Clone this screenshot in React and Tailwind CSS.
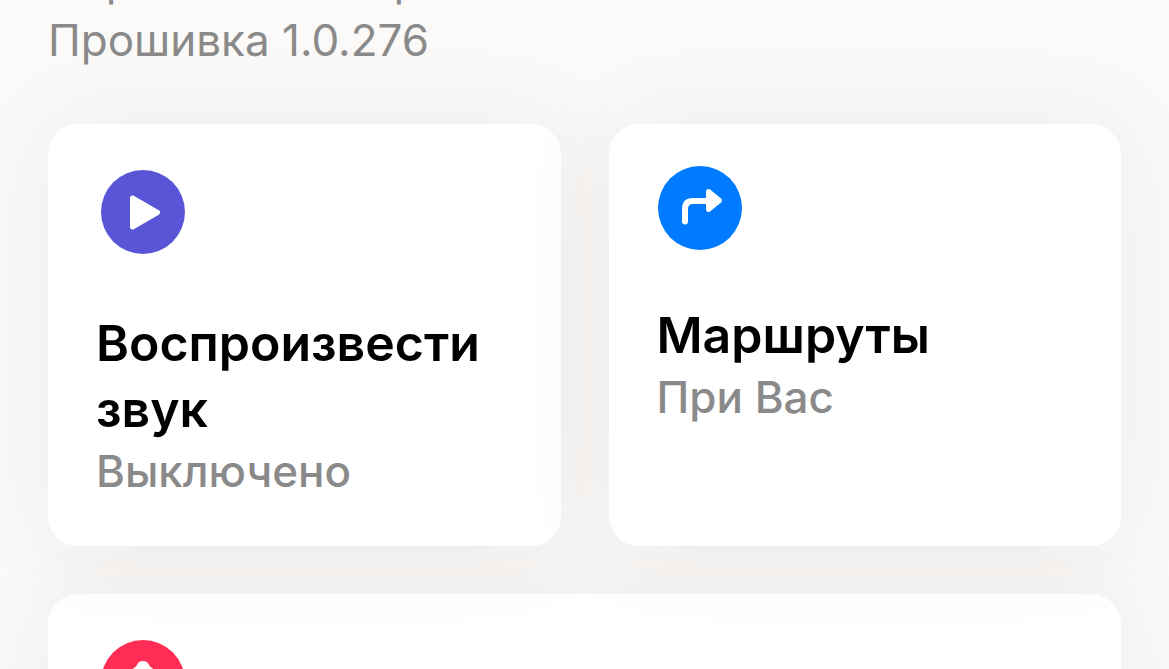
function PlayIcon() {
  return (
    <svg viewBox="0 0 84 84" className="h-full w-full" aria-hidden="true">
      <circle cx="42" cy="42" r="42" fill="#5856d6" />
      <path
        d="M31.500 28 L56.500 42.500 L31.500 57 Z"
        fill="#fff"
        stroke="#fff"
        strokeWidth="5"
        strokeLinejoin="round"
      />
    </svg>
  );
}

function RouteIcon() {
  return (
    <svg viewBox="0 0 84 84" className="h-full w-full" aria-hidden="true">
      <circle cx="42" cy="42" r="42" fill="#007aff" />
      <path
        d="M27 55.500 V43 Q27 35 35 35 H50"
        fill="none"
        stroke="#fff"
        strokeWidth="6"
        strokeLinecap="round"
      />
      <path
        d="M50.500 25.500 L61.500 34.500 L50.500 43.500 Z"
        fill="#fff"
        stroke="#fff"
        strokeWidth="5"
        strokeLinejoin="round"
      />
    </svg>
  );
}

function BellIcon() {
  return (
    <svg viewBox="0 0 84 84" className="h-full w-full" aria-hidden="true">
      <circle cx="42" cy="42" r="42" fill="#ff2d55" />
      <path
        d="M36.500 24 Q38 21 42 21 Q46 21 47.500 24 Q48 26 51 28 C55 31 56 34 56 39 C56 46 60 48 60 53 H24 C24 48 28 46 28 39 C28 34 29 31 33 28 Q36 26 36.500 24 Z"
        fill="#fff"
      />
      <path d="M36 56 H48 Q47 62 42 62 Q37 62 36 56 Z" fill="#fff" />
    </svg>
  );
}

const cardClass =
  'flex w-full flex-col items-start rounded-[30px] bg-white px-12 pt-[42px] pb-[46px] text-left shadow-[0_0_100px_rgba(50,46,44,0.07)]';

function ActionCard({ icon, iconClass, title, status }) {
  return (
    <button type="button" className={cardClass}>
      <span className={iconClass}>{icon}</span>
      <span className="mt-[52px] text-[50px] leading-[66px] font-semibold text-black">{title}</span>
      <span className="text-[44px] leading-[58px] font-medium text-[#8a8a8a]">{status}</span>
    </button>
  );
}

export default function App() {
  return (
    <main className="h-screen overflow-hidden bg-[#fbfaf8] px-12 font-['Inter','Liberation_Sans',sans-serif]">
      <div className="-mt-[50px] text-[44px] leading-[60px] text-[#8a8a8a]">
        <p>Серийный номер</p>
        <p>Прошивка 1.0.276</p>
      </div>

      <div className="mt-[54px] grid grid-cols-2 gap-12">
        <ActionCard
          icon={<PlayIcon />}
          iconClass="ml-px h-[92px] w-[92px] p-1"
          title="Воспроизвести звук"
          status="Выключено"
        />
        <ActionCard
          icon={<RouteIcon />}
          iconClass="ml-px h-[84px] w-[84px]"
          title="Маршруты"
          status="При Вас"
        />
      </div>

      <section aria-label="Уведомления" className="mt-12">
        <div className={`${cardClass} min-h-[300px]`}>
          <span className="ml-px h-[92px] w-[92px] p-1">
            <BellIcon />
          </span>
        </div>
      </section>
    </main>
  );
}
